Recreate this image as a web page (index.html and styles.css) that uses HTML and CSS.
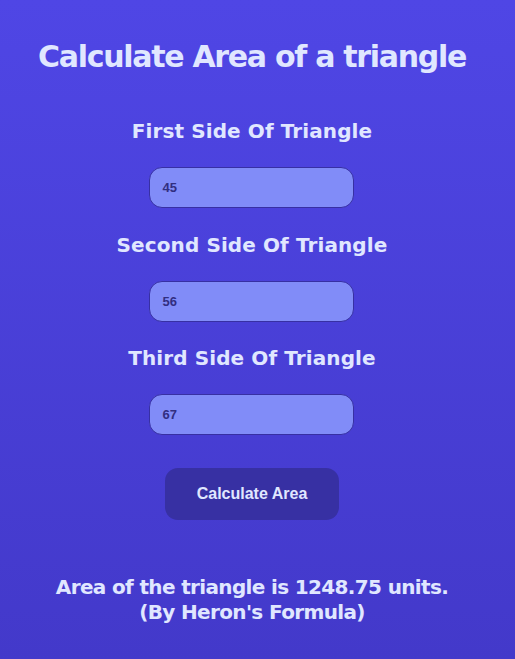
FILE: index.html
```html
<!DOCTYPE html>
<html>
<head>
<meta charset="utf-8">
<link rel="stylesheet" href="styles.css">
</head>
<body>
<main class="page">
  <h1 class="title">Calculate Area of a triangle</h1>
  <div class="field">
    <label class="label">First Side Of Triangle</label>
    <input class="input" type="text" value="45">
  </div>
  <div class="field">
    <label class="label">Second Side Of Triangle</label>
    <input class="input" type="text" value="56">
  </div>
  <div class="field">
    <label class="label">Third Side Of Triangle</label>
    <input class="input" type="text" value="67">
  </div>
  <button class="btn">Calculate Area</button>
  <p class="result">Area of the triangle is 1248.75 units.<br>(By Heron's Formula)</p>
</main>
</body>
</html>
```
FILE: styles.css
```css
html, body {
  margin: 0;
  padding: 0;
  height: 100%;
}
body {
  background: linear-gradient(180deg, #4f46e5 0%, #4339ca 100%);
  color: #e0e7ff;
  font-family: "DejaVu Sans", sans-serif;
}
.page {
  display: flex;
  flex-direction: column;
  align-items: center;
  padding: 39px 11px 0 0;
}
.title {
  margin: 0;
  font-size: 30px;
  font-weight: 700;
  line-height: 36px;
  letter-spacing: -1.3px;
}
.field {
  display: flex;
  flex-direction: column;
  align-items: center;
}
.field:first-of-type { margin-top: 43px; }
.label {
  font-size: 20px;
  font-weight: 700;
  line-height: 26px;
  letter-spacing: 0.1px;
}
.input {
  box-sizing: border-box;
  width: 205px;
  height: 41px;
  margin: 23px 0 23.5px;
  padding: 0 12px;
  background: #818cf8;
  border: 1px solid #3730a3;
  border-radius: 13px;
  color: #312e81;
  font-family: "Liberation Sans", Arial, sans-serif;
  font-weight: 700;
  font-size: 13px;
  outline: none;
}
.btn {
  margin-top: 9.5px;
  width: 174px;
  height: 52px;
  background: #3730a3;
  border: none;
  border-radius: 13px;
  color: #e0e7ff;
  font-family: "Liberation Sans", Arial, sans-serif;
  font-weight: 700;
  font-size: 16px;
}
.result {
  margin: 55px 0 0;
  text-align: center;
  font-size: 20px;
  font-weight: 700;
  line-height: 25px;
  letter-spacing: -0.65px;
}
```
